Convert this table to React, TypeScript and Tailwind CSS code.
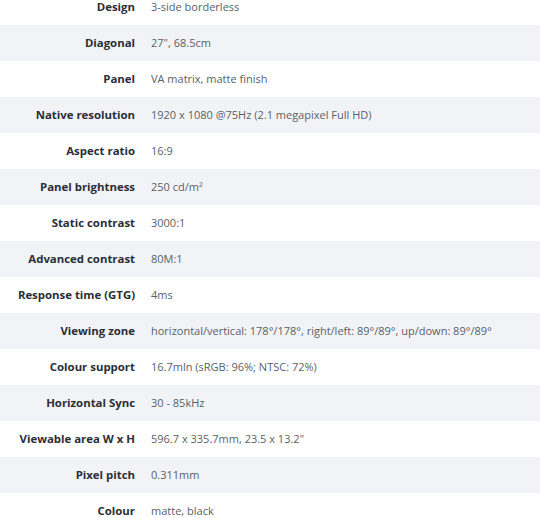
import React from "react";

const rows: [string, string][] = [
  ["Design", "3-side borderless"],
  ["Diagonal", "27\", 68.5cm"],
  ["Panel", "VA matrix, matte finish"],
  ["Native resolution", "1920 x 1080 @75Hz (2.1 megapixel Full HD)"],
  ["Aspect ratio", "16:9"],
  ["Panel brightness", "250 cd/m²"],
  ["Static contrast", "3000:1"],
  ["Advanced contrast", "80M:1"],
  ["Response time (GTG)", "4ms"],
  ["Viewing zone", "horizontal/vertical: 178°/178°, right/left: 89°/89°, up/down: 89°/89°"],
  ["Colour support", "16.7mln (sRGB: 96%; NTSC: 72%)"],
  ["Horizontal Sync", "30 - 85kHz"],
  ["Viewable area W x H", "596.7 x 335.7mm, 23.5 x 13.2\""],
  ["Pixel pitch", "0.311mm"],
  ["Colour", "matte, black"],
];

export default function App() {
  return (
    <div className="w-[540px] h-[518px] overflow-hidden bg-white" style={{ fontFamily: "'Open Sans', 'Noto Sans', sans-serif" }}>
      <div className="mt-[-11px] flex flex-col">
        {rows.map(([k, v], i) => (
          <div key={k} className={`flex h-[36px] items-center ${i % 2 === 1 ? "bg-[#f1f3f6]" : "bg-white"}`}>
            <div className="w-[135px] shrink-0 text-right text-[11.4px] font-bold text-[#2a2e36]">{k}</div>
            <div className="pl-[16px] text-[11px] text-[#5a5f68] whitespace-nowrap">{v}</div>
          </div>
        ))}
      </div>
    </div>
  );
}
